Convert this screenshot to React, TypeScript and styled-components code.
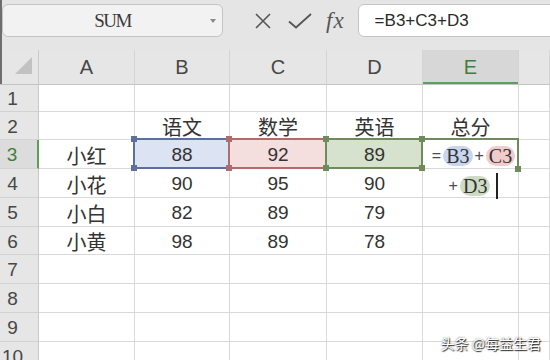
import { FC, Fragment } from "react";
import styled, { createGlobalStyle, css } from "styled-components";

type Tone = "blue" | "red" | "green";

const tones: Record<Tone, { fill: string; line: string; pill: string }> = {
    blue: { fill: "#dce3f3", line: "#5d6f9c", pill: "#c9d5ef" },
    red: { fill: "#f5dede", line: "#b06b6b", pill: "#f0cccc" },
    green: { fill: "#d6e2cd", line: "#6f8b5c", pill: "#cddbc3" },
};

const GlobalStyle = createGlobalStyle`
    body {
        margin: 0;
        overflow: hidden;
        font-family: "Liberation Sans", "Noto Sans CJK SC", sans-serif;
    }
`;

const Page = styled.div`
    position: relative;
    width: 550px;
    height: 360px;
    overflow: hidden;
    background: #ffffff;
`;

const Toolbar = styled.div`
    display: flex;
    align-items: flex-start;
    height: 50px;
    box-sizing: border-box;
    padding: 4px 0 0 2px;
    background: #e5e5e5;
    box-shadow: inset 2px 0 0 #6e6e6e;
`;

const NameBox = styled.div`
    display: flex;
    align-items: center;
    width: 221px;
    height: 33px;
    box-sizing: border-box;
    border: 1px solid #c4c4c4;
    border-radius: 6px;
    background: #f2f2f2;
`;

const NameText = styled.span`
    flex: 1;
    text-align: center;
    padding-left: 12px;
    font-family: "Liberation Serif", serif;
    font-size: 19px;
    letter-spacing: -1.5px;
    color: #3a3a3a;
`;

const DropArrow = styled.svg`
    width: 6px;
    height: 4px;
    margin-right: 6px;
`;

const IconButton = styled.div<{ $gap: number }>`
    display: flex;
    align-items: center;
    height: 33px;
    margin-left: ${(p) => p.$gap}px;
    color: #555555;
`;

const Fx = styled.span`
    font-family: "Liberation Serif", serif;
    font-style: italic;
    font-size: 23px;
    color: #555555;
    letter-spacing: 1px;
`;

const FormulaBox = styled.div`
    display: flex;
    align-items: center;
    flex: 1;
    height: 33px;
    margin: 0 -12px 0 13px;
    padding-left: 16px;
    box-sizing: border-box;
    border: 1px solid #c4c4c4;
    border-radius: 6px;
    background: #ffffff;
    font-size: 17px;
    color: #2a2a2a;
`;

const Sheet = styled.div`
    display: grid;
    grid-template-columns: 39px 96px 95px 97px 96px 96px 1fr;
    grid-template-rows: 35px 27px 28px 29px 29px 29px 28px 29px 29px 29px 29px;
`;

const Corner = styled.div`
    display: flex;
    align-items: flex-end;
    justify-content: flex-end;
    padding: 0 6px 10px 0;
    background: #e6e6e6;
    border-right: 1px solid #cacaca;
    border-bottom: 1px solid #c4c4c4;
    box-shadow: inset 2px 0 0 #6e6e6e;
`;

const ColHead = styled.div<{ $active?: boolean }>`
    display: flex;
    align-items: center;
    justify-content: center;
    box-sizing: border-box;
    background: ${(p) => (p.$active ? "#d7d7d7" : "#e6e6e6")};
    border-right: 1px solid #d4d4d4;
    border-bottom: 1px solid #c4c4c4;
    font-size: 20px;
    color: ${(p) => (p.$active ? "#3f7e3f" : "#474747")};
    ${(p) =>
        p.$active &&
        css`
            box-shadow: inset 0 -2px 0 #5c9e5c;
        `}
`;

const RowHead = styled.div<{ $active?: boolean }>`
    display: flex;
    align-items: center;
    justify-content: center;
    padding: 2px 13px 0 0;
    box-sizing: border-box;
    background: ${(p) => (p.$active ? "#dcdcdc" : "#e6e6e6")};
    border-right: ${(p) => (p.$active ? "2px solid #5c9e5c" : "1px solid #c8c8c8")};
    border-bottom: 1px solid #d2d2d2;
    font-size: 19px;
    color: ${(p) => (p.$active ? "#3f7e3f" : "#474747")};
`;

const Cell = styled.div<{ $tone?: Tone; $cjk?: boolean; $overlay?: boolean }>`
    display: flex;
    align-items: center;
    justify-content: center;
    padding-top: 2px;
    box-sizing: border-box;
    min-width: 0;
    border-right: 1px solid #d9d9d9;
    border-bottom: 1px solid #d9d9d9;
    background: ${(p) => (p.$tone ? tones[p.$tone].fill : "#ffffff")};
    font-size: ${(p) => (p.$cjk ? 20 : 19)}px;
    color: #333333;
    ${(p) =>
        p.$overlay &&
        css`
            position: relative;
        `}
`;

const Frame = styled.div<{ $color: string; $open?: boolean }>`
    position: absolute;
    top: -2px;
    left: -2px;
    right: -1px;
    bottom: -1px;
    z-index: 2;
    border: 2px solid ${(p) => p.$color};
    ${(p) =>
        p.$open &&
        css`
            left: 0;
            bottom: 0;
            border-left: none;
            border-bottom: none;
        `}
`;

const Handle = styled.span<{ $color: string; $x: "l" | "r"; $y: "t" | "b" }>`
    position: absolute;
    width: 6px;
    height: 6px;
    background: ${(p) => p.$color};
    ${(p) => (p.$x === "l" ? "left: -4px;" : "right: -4px;")}
    ${(p) => (p.$y === "t" ? "top: -4px;" : "bottom: -4px;")}
`;

const Editor = styled.div`
    position: absolute;
    top: 1px;
    left: 6px;
    right: 0;
    z-index: 3;
    display: flex;
    flex-direction: column;
`;

const EditLine = styled.div`
    display: flex;
    align-items: center;
    justify-content: center;
    gap: 2px;
    height: 30px;
`;

const Op = styled.span`
    font-size: 16px;
    color: #4a4a4a;
`;

const Pill = styled.span<{ $tone: Tone }>`
    display: inline-block;
    height: 20px;
    line-height: 21px;
    padding: 0 3px;
    border-radius: 10px;
    background: ${(p) => tones[p.$tone].pill};
    font-family: "Liberation Serif", serif;
    font-size: 20px;
    color: #333333;
`;

const Caret = styled.span`
    width: 2px;
    height: 26px;
    margin-left: 4px;
    background: #222222;
`;

const Watermark = styled.div`
    position: absolute;
    right: 9px;
    bottom: 7px;
    font-family: "Noto Sans CJK SC", sans-serif;
    font-size: 14px;
    color: #ffffff;
    text-shadow: 1px 1px 1px rgba(0, 0, 0, 0.8), 0 0 2px rgba(0, 0, 0, 0.6);
`;

const columns = ["A", "B", "C", "D", "E"];

const data: string[][] = [
    ["", "", "", "", ""],
    ["", "语文", "数学", "英语", "总分"],
    ["小红", "88", "92", "89", ""],
    ["小花", "90", "95", "90", ""],
    ["小白", "82", "89", "79", ""],
    ["小黄", "98", "89", "78", ""],
    ["", "", "", "", ""],
    ["", "", "", "", ""],
    ["", "", "", "", ""],
    ["", "", "", "", ""],
];

// row 3 references: B3 blue, C3 red, D3 green
const refTones: Tone[] = ["blue", "red", "green"];

const Selection: FC<{ tone: Tone }> = ({ tone }) => {
    const c = tones[tone].line;
    return (
        <Frame $color={c}>
            <Handle $color={c} $x="l" $y="t" />
            <Handle $color={c} $x="r" $y="t" />
            <Handle $color={c} $x="l" $y="b" />
            <Handle $color={c} $x="r" $y="b" />
        </Frame>
    );
};

const FormulaEditor: FC = () => (
    <>
        <Frame $color={tones.green.line} $open>
            <Handle $color={tones.green.line} $x="r" $y="b" />
        </Frame>
        <Editor>
            <EditLine>
                <Op>=</Op>
                <Pill $tone="blue">B3</Pill>
                <Op>+</Op>
                <Pill $tone="red">C3</Pill>
            </EditLine>
            <EditLine>
                <Op>+</Op>
                <Pill $tone="green">D3</Pill>
                <Caret />
            </EditLine>
        </Editor>
    </>
);

export default function App() {
    return (
        <Page>
            <GlobalStyle />
            <Toolbar>
                <NameBox>
                    <NameText>SUM</NameText>
                    <DropArrow viewBox="0 0 6 4">
                        <path d="M0 0h6L3 4z" fill="#8a8a8a" />
                    </DropArrow>
                </NameBox>
                <IconButton $gap={31}>
                    <svg width="18" height="18" viewBox="0 0 18 18">
                        <path d="M2 2L16 16M16 2L2 16" stroke="#555" strokeWidth="1.6" fill="none" />
                    </svg>
                </IconButton>
                <IconButton $gap={16}>
                    <svg width="24" height="16" viewBox="0 0 24 16">
                        <path d="M1 8.5L8 14.5L23 1" stroke="#555" strokeWidth="1.8" fill="none" />
                    </svg>
                </IconButton>
                <IconButton $gap={14}>
                    <Fx>fx</Fx>
                </IconButton>
                <FormulaBox>=B3+C3+D3</FormulaBox>
            </Toolbar>

            <Sheet>
                <Corner>
                    <svg width="17" height="17" viewBox="0 0 17 17">
                        <path d="M17 0V17H0z" fill="#c2c2c2" />
                    </svg>
                </Corner>
                {columns.map((c) => (
                    <ColHead key={c} $active={c === "E"}>
                        {c}
                    </ColHead>
                ))}
                <ColHead />

                {data.map((row, r) => (
                    <Fragment key={r}>
                        <RowHead $active={r === 2}>{r + 1}</RowHead>
                        {row.map((val, c) => {
                            const isRefRow = r === 2 && c >= 1 && c <= 3;
                            const tone = isRefRow ? refTones[c - 1] : undefined;
                            const isActive = r === 2 && c === 4;
                            return (
                                <Cell
                                    key={c}
                                    $tone={tone}
                                    $cjk={/[\u4e00-\u9fff]/.test(val)}
                                    $overlay={!!tone || isActive}
                                >
                                    {val}
                                    {tone && <Selection tone={tone} />}
                                    {isActive && <FormulaEditor />}
                                </Cell>
                            );
                        })}
                        <Cell />
                    </Fragment>
                ))}
            </Sheet>

            <Watermark>头条 @每益生君</Watermark>
        </Page>
    );
}
